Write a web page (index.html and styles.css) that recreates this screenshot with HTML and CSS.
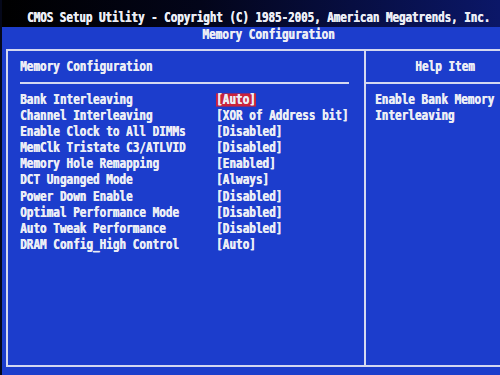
FILE: index.html
```html
<!DOCTYPE html>
<html lang="en">
<head>
  <meta charset="UTF-8">
  <title>CMOS Setup Utility</title>
  <link rel="stylesheet" href="styles.css">
</head>
<body>
  <div class="screen">
    <header class="topbar">
      <span class="txt">CMOS Setup Utility - Copyright (C) 1985-2005, American Megatrends, Inc.</span>
    </header>
    <div class="subtitle"><span class="txt">Memory Configuration</span></div>
    <div class="frame">
      <section class="main-panel">
        <div class="panel-head"><span class="txt">Memory Configuration</span></div>
        <ul class="options">
          <li><span class="label">Bank Interleaving</span><span class="value selected">[Auto]</span></li>
          <li><span class="label">Channel Interleaving</span><span class="value">[XOR of Address bit]</span></li>
          <li><span class="label">Enable Clock to All DIMMs</span><span class="value">[Disabled]</span></li>
          <li><span class="label">MemClk Tristate C3/ATLVID</span><span class="value">[Disabled]</span></li>
          <li><span class="label">Memory Hole Remapping</span><span class="value">[Enabled]</span></li>
          <li><span class="label">DCT Unganged Mode</span><span class="value">[Always]</span></li>
          <li><span class="label">Power Down Enable</span><span class="value">[Disabled]</span></li>
          <li><span class="label">Optimal Performance Mode</span><span class="value">[Disabled]</span></li>
          <li><span class="label">Auto Tweak Performance</span><span class="value">[Disabled]</span></li>
          <li><span class="label">DRAM Config_High Control</span><span class="value">[Auto]</span></li>
        </ul>
      </section>
      <aside class="help-panel">
        <div class="panel-head help-head"><span class="txt">Help Item</span></div>
        <div class="help-text">
          <div class="txt">Enable Bank Memory</div>
          <div class="txt">Interleaving</div>
        </div>
      </aside>
    </div>
  </div>
</body>
</html>
```

FILE: styles.css
```css
body {
  margin: 0;
  background: #000;
}
.screen {
  width: 500px;
  height: 375px;
  overflow: hidden;
  background-color: #1c3dcc;
  border-left: 2px solid #05081a;
  box-sizing: border-box;
  color: #eceef6;
  font-family: "DejaVu Sans Mono", "Liberation Mono", monospace;
  font-weight: bold;
  font-size: 11px;
  white-space: nowrap;
  text-shadow: 0.4px 0 0 #eceef6;
}
/* BIOS glyphs are tall and narrow */
.txt, .options li {
  display: inline-block;
  transform: scaleY(1.32);
}
.topbar {
  height: 27px;
  line-height: 14px;
  padding: 11px 0 0 25px;
  box-sizing: border-box;
  letter-spacing: -0.1px;
  background: linear-gradient(to right, #000 0%, #03051a 40%, #0b1768 100%);
}
.subtitle {
  height: 14px;
  line-height: 14px;
  padding-top: 1px;
  text-align: center;
  padding-left: 35px;
}
.frame {
  display: flex;
  width: 526px;
  height: 318px;
  margin: 7px 0 0 4px;
  border: 2px solid #d4d8f0;
  border-right: none;
  box-sizing: border-box;
}
.main-panel {
  width: 356px;
  padding: 8px 15px 0 12px;
  box-sizing: border-box;
}
.help-panel {
  flex: 1;
  padding-top: 8px;
  border-left: 2px solid #d4d8f0;
}
.panel-head {
  height: 16px;
  line-height: 16px;
  padding-bottom: 7px;
  border-bottom: 2px solid #d4d8f0;
}
.help-head {
  text-align: center;
  padding-right: 8px;
}
.options {
  list-style: none;
  margin: 8px 0 0;
  padding: 0;
}
.options li {
  display: flex;
  height: 16.1px;
  line-height: 16px;
  align-items: center;
}
.label {
  width: 196px;
}
.value.selected {
  display: inline-block;
  line-height: 10px;
  height: 10px;
  background-color: #c9233c;
}
.help-text {
  padding: 8px 0 0 9px;
}
.help-text .txt {
  display: block;
  height: 16px;
  line-height: 16px;
}
```
